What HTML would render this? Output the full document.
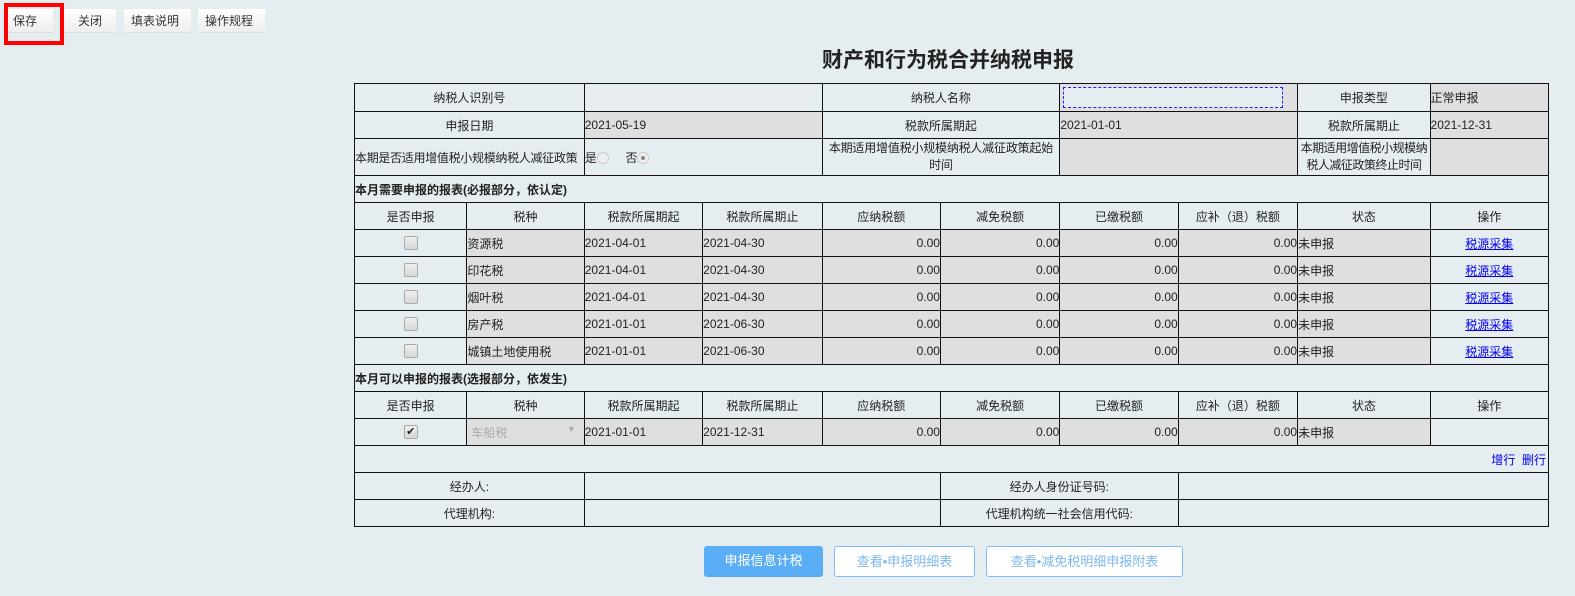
<!DOCTYPE html>
<html><head><meta charset="utf-8">
<style>
*{margin:0;padding:0;box-sizing:border-box}
body{width:1575px;height:596px;background:#e6edf1;font-family:"Liberation Sans","Noto Sans CJK SC",sans-serif;font-size:12px;color:#222;position:relative;overflow:hidden}
.tb{position:absolute;top:9px;height:24px;line-height:24px;font-size:12px;color:#333;background:linear-gradient(#fff,#eee);border-bottom:1px solid #ddd;padding:0 7px}
.red{position:absolute;left:4px;top:3px;width:60px;height:42px;border:4px solid #f00}
h1{position:absolute;left:0;width:1896px;top:44px;text-align:center;font-size:21px;font-weight:bold;color:#222}
table{position:absolute;left:354px;top:83px;width:1195px;border-collapse:collapse;table-layout:fixed}
td{border:1px solid #111;height:27px;text-align:center;font-size:12px;padding:0;white-space:nowrap;overflow:hidden}
td.g{background:#dfdfdf;text-align:left}
td.r{background:#dfdfdf;text-align:right}
td.l{text-align:left}
.sec{text-align:left;font-weight:bold;border-left:1px solid #111;border-right:1px solid #111}
.cb{display:inline-block;width:14px;height:14px;border:1px solid #aaa;border-radius:2px;background:linear-gradient(#eee,#d8d8d8);vertical-align:middle;font-size:11px;line-height:12px}
a{color:#00e;text-decoration:underline}
.rd{display:inline-block;width:12px;height:12px;border:1px solid #ccc;border-radius:50%;background:#eee;vertical-align:middle;position:relative}
.bt{position:absolute;top:546px;height:31px;line-height:29px;border-radius:3px;text-align:center;font-size:13px}
.two{line-height:17px;font-size:12px;letter-spacing:-0.2px}
</style></head><body>
<div class="tb" style="left:6px;width:47px">保存</div>
<div class="tb" style="left:64px;width:52px;text-align:center">关闭</div>
<div class="tb" style="left:124px;width:67px">填表说明</div>
<div class="tb" style="left:198px;width:67px">操作规程</div>
<div class="red"></div>
<h1>财产和行为税合并纳税申报</h1>
<table>
<colgroup><col style="width:112px"><col style="width:117px"><col style="width:118px"><col style="width:119px"><col style="width:118px"><col style="width:119px"><col style="width:118px"><col style="width:119px"><col style="width:132px"><col style="width:118px"></colgroup>
<tr><td colspan="2">纳税人识别号</td><td colspan="2" style="padding:3px"><div style="background:#e9ecee;height:20px;width:220px"></div></td><td colspan="2">纳税人名称</td><td colspan="2" class="g" style="padding:3px"><div style="border:1px dashed #22f;height:21px;width:220px;background:#e6edf1"></div></td><td>申报类型</td><td class="g">正常申报</td></tr>
<tr><td colspan="2">申报日期</td><td colspan="2" class="g">2021-05-19</td><td colspan="2">税款所属期起</td><td colspan="2" class="g">2021-01-01</td><td>税款所属期止</td><td class="g">2021-12-31</td></tr>
<tr style="height:37px"><td colspan="2" class="l" style="height:37px;letter-spacing:-0.3px">本期是否适用增值税小规模纳税人减征政策</td><td colspan="2" class="l" style="height:37px">是<span class="rd"></span>&nbsp;&nbsp;&nbsp;&nbsp;&nbsp;否<span class="rd"><span style="position:absolute;left:3px;top:3px;width:4px;height:4px;border-radius:50%;background:#888"></span></span></td><td colspan="2" class="two" style="height:37px">本期适用增值税小规模纳税人减征政策起始<br>时间</td><td colspan="2" class="g" style="height:37px"></td><td class="two" style="height:37px;letter-spacing:-0.5px">本期适用增值税小规模纳<br>税人减征政策终止时间</td><td class="g" style="height:37px"></td></tr>
<tr><td colspan="10" class="sec">本月需要申报的报表(必报部分，依认定)</td></tr>
<tr><td>是否申报</td><td>税种</td><td>税款所属期起</td><td>税款所属期止</td><td>应纳税额</td><td>减免税额</td><td>已缴税额</td><td>应补（退）税额</td><td>状态</td><td>操作</td></tr>
<tr><td><span class="cb"></span></td><td class="g">资源税</td><td class="g">2021-04-01</td><td class="g">2021-04-30</td><td class="r">0.00</td><td class="r">0.00</td><td class="r">0.00</td><td class="r">0.00</td><td class="g">未申报</td><td><a>税源采集</a></td></tr>
<tr><td><span class="cb"></span></td><td class="g">印花税</td><td class="g">2021-04-01</td><td class="g">2021-04-30</td><td class="r">0.00</td><td class="r">0.00</td><td class="r">0.00</td><td class="r">0.00</td><td class="g">未申报</td><td><a>税源采集</a></td></tr>
<tr><td><span class="cb"></span></td><td class="g">烟叶税</td><td class="g">2021-04-01</td><td class="g">2021-04-30</td><td class="r">0.00</td><td class="r">0.00</td><td class="r">0.00</td><td class="r">0.00</td><td class="g">未申报</td><td><a>税源采集</a></td></tr>
<tr><td><span class="cb"></span></td><td class="g">房产税</td><td class="g">2021-01-01</td><td class="g">2021-06-30</td><td class="r">0.00</td><td class="r">0.00</td><td class="r">0.00</td><td class="r">0.00</td><td class="g">未申报</td><td><a>税源采集</a></td></tr>
<tr><td><span class="cb"></span></td><td class="g">城镇土地使用税</td><td class="g">2021-01-01</td><td class="g">2021-06-30</td><td class="r">0.00</td><td class="r">0.00</td><td class="r">0.00</td><td class="r">0.00</td><td class="g">未申报</td><td><a>税源采集</a></td></tr>
<tr><td colspan="10" class="sec">本月可以申报的报表(选报部分，依发生)</td></tr>
<tr><td>是否申报</td><td>税种</td><td>税款所属期起</td><td>税款所属期止</td><td>应纳税额</td><td>减免税额</td><td>已缴税额</td><td>应补（退）税额</td><td>状态</td><td>操作</td></tr>
<tr><td><span class="cb">✔</span></td><td class="g" style="color:#aaa;padding-left:4px">车船税<span style="float:right;margin-right:8px;font-size:9px">▼</span></td><td class="g">2021-01-01</td><td class="g">2021-12-31</td><td class="r">0.00</td><td class="r">0.00</td><td class="r">0.00</td><td class="r">0.00</td><td class="g">未申报</td><td></td></tr>
<tr><td colspan="10" style="text-align:right;color:#00e;padding-right:2px">增行&nbsp;&nbsp;删行</td></tr>
<tr><td colspan="2">经办人:</td><td colspan="3"></td><td colspan="2">经办人身份证号码:</td><td colspan="3"></td></tr>
<tr><td colspan="2">代理机构:</td><td colspan="3"></td><td colspan="2">代理机构统一社会信用代码:</td><td colspan="3"></td></tr>
</table>
<div class="bt" style="left:704px;width:119px;background:#59aef5;color:#fff">申报信息计税</div>
<div class="bt" style="left:834px;width:141px;background:#fff;border:1px solid #7fbff5;color:#7fb8ee">查看•申报明细表</div>
<div class="bt" style="left:986px;width:197px;background:#fff;border:1px solid #7fbff5;color:#7fb8ee">查看•减免税明细申报附表</div>
</body></html>
